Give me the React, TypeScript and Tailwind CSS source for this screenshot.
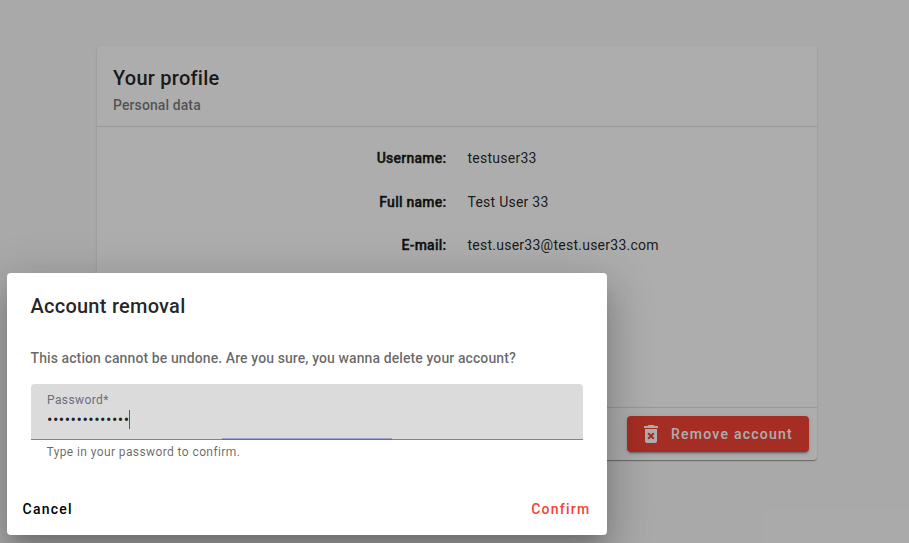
import { MdDeleteForever } from "react-icons/md";

const details = [
  { label: "Username:", value: "testuser33" },
  { label: "Full name:", value: "Test User 33" },
  { label: "E-mail:", value: "test.user33@test.user33.com" },
];

function ProfileCard() {
  return (
    <section className="ml-[97px] flex h-[414px] w-[720px] flex-col rounded bg-white shadow-[0_2px_1px_-1px_rgba(0,0,0,0.2),0_1px_1px_0_rgba(0,0,0,0.14),0_1px_3px_0_rgba(0,0,0,0.12)]">
      <header className="h-[81px] border-b border-black/12 px-4 pt-4">
        <h1 className="text-[20px] leading-8 font-medium tracking-[0.25px] text-black/87">Your profile</h1>
        <p className="text-[14px] leading-[22px] font-medium tracking-[0.1px] text-black/54">Personal data</p>
      </header>
      <dl className="flex grow flex-col gap-[23.6px] pt-[21px] text-[14px] leading-5 tracking-[0.25px] text-black/87">
        {details.map((item) => (
          <div key={item.label} className="flex gap-[21px]">
            <dt className="w-[349.5px] text-right font-medium tracking-[0.25px] [-webkit-text-stroke:0.45px_currentColor]">{item.label}</dt>
            <dd>{item.value}</dd>
          </div>
        ))}
      </dl>
      <footer className="flex h-[53px] items-center justify-end border-t border-black/12 px-2">
        <button className="flex h-9 w-[182px] items-center rounded bg-[#f44336] pl-3 text-[14px] font-medium tracking-[1.25px] text-white shadow-[0_3px_1px_-2px_rgba(0,0,0,0.2),0_2px_2px_0_rgba(0,0,0,0.14),0_1px_5px_0_rgba(0,0,0,0.12)]">
          <MdDeleteForever className="mr-2 size-6" />
          Remove account
        </button>
      </footer>
    </section>
  );
}

function RemovalDialog() {
  return (
    <div className="absolute top-[273px] left-[7px] flex h-[262px] w-[600px] flex-col rounded bg-white shadow-[0_11px_15px_-7px_rgba(0,0,0,0.2),0_24px_38px_3px_rgba(0,0,0,0.14),0_9px_46px_8px_rgba(0,0,0,0.12)]">
      <div className="grow px-6 pt-[17px]">
        <h2 className="-ml-[0.5px] text-[20px] leading-8 font-medium tracking-[0.25px] text-black/87">Account removal</h2>
        <p className="mt-[25px] -ml-[0.5px] text-[14px] leading-[22px] font-medium tracking-[0.1px] text-black/60">
          This action cannot be undone. Are you sure, you wanna delete your account?
        </p>
        <div className="relative mt-[15px] h-14 rounded-t border-b border-[#848484] bg-[#dbdbdb] px-4 pt-[9px]">
          <div className="text-[12px] leading-[14px] tracking-[0.4px] text-[#6c6c7b]">Password*</div>
          <div className="mt-[2.5px] flex h-[19px] items-center">
            <input
              type="password"
              defaultValue="secretpassword"
              aria-label="Password"
              className="h-[19px] w-[82px] bg-transparent p-0 text-[16px] leading-[19px] tracking-[0.5px] text-black/87 outline-none"
            />
            <span className="h-[19px] w-px bg-[#3f51b5]" />
          </div>
          <div className="absolute -bottom-px left-[191px] h-[2px] w-[170px] bg-[#3f51b5]/40" />
        </div>
        <p className="pt-0.5 pl-[15.5px] text-[12px] leading-5 tracking-[0.4px] text-black/60">Type in your password to confirm.</p>
      </div>
      <div className="flex h-[52px] items-center justify-between pr-[16.5px] pl-[15.5px] text-[14px] font-medium tracking-[1.25px]">
        <button className="text-black">Cancel</button>
        <button className="text-[#f44336]">Confirm</button>
      </div>
    </div>
  );
}

export default function App() {
  return (
    <main className="relative h-[543px] w-[909px] overflow-hidden bg-[#fafafa] pt-[46px] font-[Roboto,sans-serif]">
      <ProfileCard />
      <div className="absolute inset-0 bg-black/32" />
      <RemovalDialog />
    </main>
  );
}
